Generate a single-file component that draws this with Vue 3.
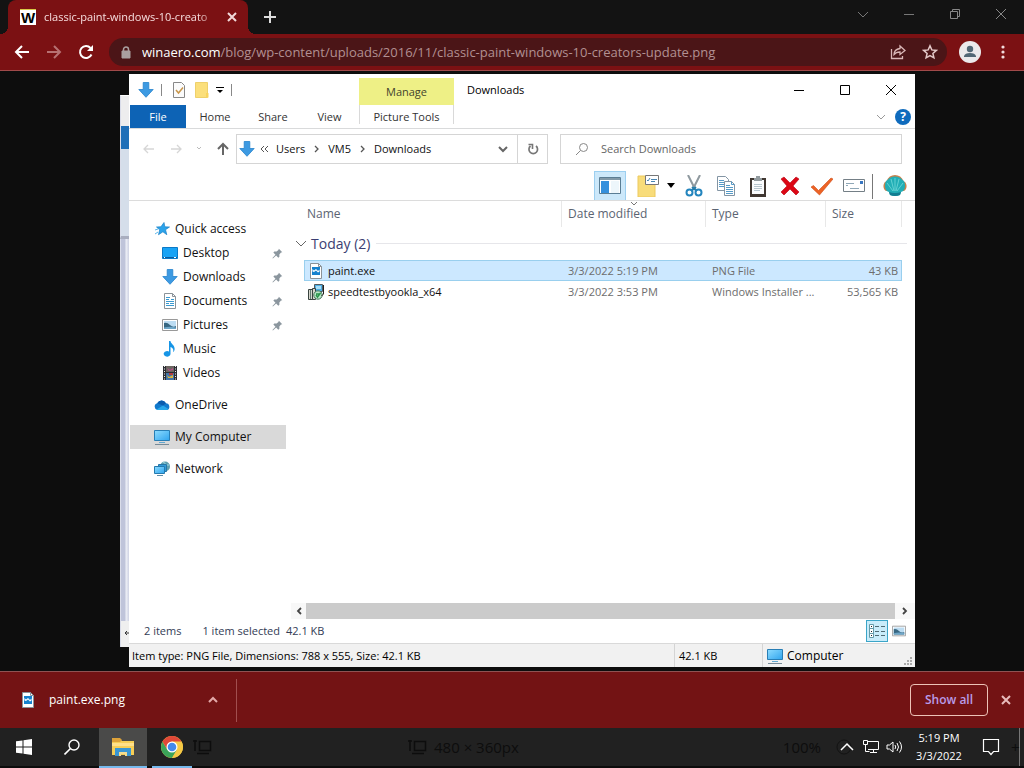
<script setup>
import { ref } from 'vue'

const selected = ref('paint.exe')
const query = ref('')

const places = [
  { name: 'Quick access', icon: 'star', level: 0 },
  { name: 'Desktop', icon: 'desktop', level: 1, pinned: true },
  { name: 'Downloads', icon: 'download', level: 1, pinned: true },
  { name: 'Documents', icon: 'document', level: 1, pinned: true },
  { name: 'Pictures', icon: 'picture', level: 1, pinned: true },
  { name: 'Music', icon: 'music', level: 1 },
  { name: 'Videos', icon: 'video', level: 1 },
  { name: 'OneDrive', icon: 'cloud', level: 0, gap: true },
  { name: 'My Computer', icon: 'monitor', level: 0, gap: true, current: true },
  { name: 'Network', icon: 'network', level: 0, gap: true }
]

const files = [
  { name: 'paint.exe', icon: 'png', date: '3/3/2022 5:19 PM', type: 'PNG File', size: '43 KB' },
  { name: 'speedtestbyookla_x64', icon: 'msi', date: '3/3/2022 3:53 PM', type: 'Windows Installer ...', size: '53,565 KB' }
]

const tools = [
  { name: 'Cut', icon: 'cut' },
  { name: 'Copy', icon: 'copy' },
  { name: 'Paste', icon: 'paste' },
  { name: 'Delete', icon: 'delete' },
  { name: 'Rename', icon: 'check' },
  { name: 'Properties', icon: 'card' }
]
</script>

<template>
  <div class="screen">
    <svg class="sprite" aria-hidden="true">
      <defs>
        <linearGradient id="blueSky" x1="0" y1="0" x2="1" y2="1">
          <stop offset="0" stop-color="#8edcff" /><stop offset="1" stop-color="#2fa4ee" />
        </linearGradient>
      </defs>
      <symbol id="download" viewBox="0 0 16 16">
        <path d="M5.2.5h5.6v7h4.4L8 15.3.8 7.500h4.400z" fill="#3d9ae2" stroke="#2583cd" stroke-width=".8" />
      </symbol>
      <symbol id="star" viewBox="0 0 16 16">
        <path d="M10 1.500l.8 4.300 4.700.2-4 2.700 1.300 5-3.900-2.900-4.400 2.900 1.200-4.900-3.200-2.800 4.400-.2z" fill="#2ba3ea" stroke="#1a7fc6" stroke-width=".7" />
        <path d="M1 9l3-1M1 13l3-2" stroke="#5db7ea" />
      </symbol>
      <symbol id="desktop" viewBox="0 0 16 16">
        <path d="M.5 2.500h15v11H.5z" fill="#18a3f5" stroke="#0b79c6" />
        <path d="M1 12.500h14" stroke="#0a5ca0" /><path d="M2 12.500h1M12 12.500h2" stroke="#fff" />
      </symbol>
      <symbol id="document" viewBox="0 0 16 16">
        <path d="M2.500.5h8l3 3v12h-11z" fill="#fff" stroke="#8b9399" />
        <path d="M4 4.500h4M4 6.500h3M9 6.500h3M4 8.500h8M4 10.500h3M8 10.500h4M4 12.500h8" stroke="#3b9ad0" />
        <path d="M10.500.5v3h3" fill="none" stroke="#8b9399" />
      </symbol>
      <symbol id="picture" viewBox="0 0 16 16">
        <path d="M.5 2.500h15v11H.5z" fill="#fff" stroke="#999" />
        <path d="M2 4h12v8H2z" fill="#bcdcf2" /><path d="M2 6q3-1 6 2t6 1v3H2z" fill="#376782" /><path d="M2 10.500q6-1.500 12 0V12H2z" fill="#6ea6c8" />
      </symbol>
      <symbol id="music" viewBox="0 0 16 16">
        <path d="M7 0h1.500c0 3 5 4 4 9-.3 1-1 2-1.500 2 1-3-.5-4-2.500-5v7a3.400 2.800 0 1 1-1.500-2.500z" fill="#1695e6" />
      </symbol>
      <symbol id="video" viewBox="0 0 16 16">
        <path d="M1 1h14v14H1z" fill="#2c2d33" /><path d="M4 1h8v6H4z" fill="#6b6560" /><path d="M4 8h8v7H4z" fill="#4275a8" />
        <path d="M5 3l3 2 3-2v2l-4 1z" fill="#b9508c" /><path d="M5 10l2 2 4-2v3H6z" fill="#d8b640" /><path d="M7 8h4v2H7z" fill="#b33b3f" />
        <path d="M2.500 1v14M13.500 1v14" stroke="#eee" stroke-dasharray="1 1.500" />
      </symbol>
      <symbol id="cloud" viewBox="0 0 16 16">
        <path d="M3.500 13a3.500 3.500 0 0 1-.3-6.800A5 5 0 0 1 12 6.200 3.500 3.500 0 0 1 13 13z" fill="#1179cc" />
        <path d="M2.500 12.500L9 8.500l5.500 3.500q-.5 1-2 1h-9q-.6 0-1-.5z" fill="#28a8ea" /><path d="M3.200 6.200A5 5 0 0 1 12 6.200L9 8.500z" fill="#0a5cae" />
      </symbol>
      <symbol id="monitor" viewBox="0 0 16 16">
        <path d="M.5 1.500h15v10H.5z" fill="url(#blueSky)" stroke="#287eb5" />
        <path d="M5 13.500h6" stroke="#62a8d0" /><path d="M1 15.500h14" stroke="#778b98" />
      </symbol>
      <symbol id="network" viewBox="0 0 16 16">
        <circle cx="11" cy="5.500" r="5" fill="#5d9faf" /><path d="M9 1q5 2 3 9M7 4h8" stroke="#a4dae2" fill="none" />
        <path d="M4.500 3.500h8v7h-8z" fill="#319bd8" stroke="#2676a7" /><path d="M.5 5.500h10v7H.5z" fill="url(#blueSky)" stroke="#247aae" />
        <path d="M3 14.500h6" stroke="#5f8ca5" />
      </symbol>
      <symbol id="pin" viewBox="0 0 12 12">
        <path d="M7.500.8l3.700 3.700-1.400.5-1.800 2 .1 2.500-1.200 1-2.400-2.400L1 11.500l-.5-.5 3.300-3.600L1.500 5l1-1.200 2.500.1 2-1.700z" fill="#8b969e" />
      </symbol>
      <symbol id="png" viewBox="0 0 16 16">
        <path d="M2.500.5h8l3 3v12h-11z" fill="#fff" stroke="#8b9298" /><path d="M10.500.5v3h3" fill="none" stroke="#8b9298" />
        <path d="M4 4h8v8H4z" fill="#1581ce" /><path d="M4.500 8.500V6l1.500 1.500L8 6l2 2 1.500-1.500v2l-1.500 1-2-2-2 1.500z" fill="#fff" />
      </symbol>
      <symbol id="msi" viewBox="0 0 16 16">
        <path d="M6.500.5h8v7h-8z" fill="#4caee5" stroke="#525b60" /><path d="M8 2h5v3H8z" fill="#a8def7" />
        <path d="M.5 5.500h4v10h-4zM4.500 4.500h3v11h-3z" fill="#d6d6cc" stroke="#38433f" /><path d="M2.500 6v9" stroke="#637d72" />
        <circle cx="10" cy="11" r="4.200" fill="#b8e5c5" stroke="#437258" /><path d="M8 11l1.500 2 3-4M8 10h4" fill="none" stroke="#299448" stroke-width="1.500" /><path d="M15.500 1v9l-2 2" fill="none" stroke="#222" />
      </symbol>
      <symbol id="cut" viewBox="0 0 22 22">
        <path d="M5 0l7 14M17 0l-7 14" stroke="#8f999f" stroke-width="2" /><path d="M9 12l5 4M13 12l-5 4" stroke="#277dab" stroke-width="2" />
        <circle cx="6.500" cy="17.500" r="3" fill="none" stroke="#2385be" stroke-width="2" /><circle cx="15.500" cy="17.500" r="3" fill="none" stroke="#2385be" stroke-width="2" />
      </symbol>
      <symbol id="copy" viewBox="0 0 22 22">
        <path d="M2.500 1.500h8l3 3v11h-11z" fill="#fff" stroke="#8395a4" /><path d="M4 5.500h5M4 7.500h7M4 9.500h7M4 11.500h6" stroke="#559ac7" />
        <path d="M9.500 6.500h7l3 3v11h-10z" fill="#fff" stroke="#8395a4" /><path d="M16.500 6.500v3h3M11 10.500h4M11 12.500h7M11 14.500h7M11 16.500h7M11 18.500h7" stroke="#559ac7" fill="none" />
      </symbol>
      <symbol id="paste" viewBox="0 0 22 22">
        <path d="M3 3h16v19H3z" fill="#403731" /><path d="M5 5h12v14H5z" fill="#fbfcfd" /><path d="M7 3h2V1h4v2h2v3H7z" fill="#929b9f" />
        <path d="M7 9.500h8M7 11.500h8M7 13.500h8M7 15.500h6" stroke="#b8c6ce" />
      </symbol>
      <symbol id="delete" viewBox="0 0 22 22">
        <path d="M2 4l3-2 6 6 6-6 3 2-6 7 6 6-3 3-6-6-6 6-3-3 6-6z" fill="#dc0715" stroke="#b70210" stroke-width=".6" />
      </symbol>
      <symbol id="check" viewBox="0 0 22 22"><path d="M0 12l2.500-1.500 5 5L20 3l2 1L8.500 20z" fill="#ed6325" stroke="#cc4a16" stroke-width=".6" /></symbol>
      <symbol id="card" viewBox="0 0 22 22">
        <path d="M.5 4.500h21v12H.5z" fill="#fff" stroke="#747f86" /><path d="M3 8.500h8M3 10.500h2M7 13.500h9" stroke="#8fa7b7" /><path d="M17 6h3v3h-3z" fill="#3876c1" />
      </symbol>
      <symbol id="shell" viewBox="0 0 24 22">
        <path d="M3 16q-3-2-2.500-6 .5-3 3-4Q6 0 12 0t8.500 6q2.500 1 3 4 .5 4-2.500 6z" fill="#c9824c" />
        <path d="M7 20l-1-3Q2 16 2 11t2.500-6Q7 1.500 12 1.500T19.500 5Q22 6 22 11t-4 6l-1 3q-5 2-10 0z" fill="#22aeb6" />
        <path d="M12 16V3M11 16L8 4M13 16l3-12M10 16L4 8M14 16l6-8" stroke="#74dbda" stroke-width=".8" /><path d="M6 17q6 2 12 0l-1 3q-5 2-10 0z" fill="#137d91" />
      </symbol>
    </svg>

    <header class="browser">
      <div class="tabstrip">
        <div class="tab">
          <span class="favicon">W</span>
          <span class="tab-title">classic-paint-windows-10-creato</span>
          <button class="plain" aria-label="Close tab"><svg width="10" height="10"><path d="M1 1l8 8M9 1l-8 8" stroke="#f2dada" stroke-width="2" /></svg></button>
        </div>
        <button class="plain new-tab" aria-label="New tab"><svg width="12" height="12"><path d="M6 0v12M0 6h12" stroke="#ddd" stroke-width="2" /></svg></button>
        <div class="frame-buttons">
          <button class="plain" aria-label="Search tabs"><svg width="12" height="12"><path d="M1 4l5 5 5-5" stroke="#777" fill="none" /></svg></button>
          <button class="plain" aria-label="Minimize"><svg width="12" height="12"><path d="M1 6.500h10" stroke="#777" /></svg></button>
          <button class="plain" aria-label="Restore"><svg width="12" height="12"><path d="M1.500 3.500h7v7h-7zM3.500 3V1.500h7v7H9" stroke="#888" fill="none" /></svg></button>
          <button class="plain" aria-label="Close"><svg width="12" height="12"><path d="M1 1l10 10M11 1L1 11" stroke="#888" /></svg></button>
        </div>
      </div>
      <div class="toolbar">
        <button class="plain nav-btn" aria-label="Back"><svg width="16" height="16"><path d="M15 8H2M8 2L2 8l6 6" stroke="#fff" stroke-width="2" fill="none" /></svg></button>
        <button class="plain nav-btn" aria-label="Forward"><svg width="16" height="16"><path d="M1 8h13M8 2l6 6-6 6" stroke="#b77172" stroke-width="2" fill="none" /></svg></button>
        <button class="plain nav-btn" aria-label="Reload"><svg width="16" height="16"><path d="M13.500 10.500A6 6 0 1 1 12.500 4" stroke="#fff" stroke-width="2" fill="none" /><path d="M15 1v6H9z" fill="#fff" /></svg></button>
        <div class="omnibox">
          <svg width="10" height="13"><path d="M1 5h8v7H1z" fill="#aaa0a0" stroke="#aaa0a0" /><path d="M2.500 5V3.500a2.500 2.500 0 0 1 5 0V5" fill="none" stroke="#aaa0a0" stroke-width="1.500" /></svg>
          <a class="url" href="#"><b>winaero.com</b>/blog/wp-content/uploads/2016/11/classic-paint-windows-10-creators-update.png</a>
          <button class="plain" aria-label="Share"><svg width="16" height="16"><path d="M1.500 5v9.500h11V12M4 10.500q0-5 6-6V2l5 4.500-5 4V8q-4 0-6 2.500z" stroke="#d9b7b7" fill="none" stroke-width="1.300" /></svg></button>
          <button class="plain" aria-label="Bookmark"><svg width="16" height="16"><path d="M8 1.800l1.800 4.100 4.500.5-3.400 3 1 4.400L8 11.500l-3.900 2.300 1-4.400-3.400-3 4.500-.5z" stroke="#e3c8c8" fill="none" stroke-width="1.500" /></svg></button>
        </div>
        <button class="plain profile" aria-label="Profile"><svg width="22" height="22"><circle cx="11" cy="11" r="11" fill="#ebe9eb" /><circle cx="11" cy="8" r="3.200" fill="#526775" /><path d="M5 16v-1q1-3 6-3t6 3v1z" fill="#526775" /></svg></button>
        <button class="plain more" aria-label="Menu"><svg width="4" height="14"><g fill="#f2dcdc"><circle cx="2" cy="2" r="1.600" /><circle cx="2" cy="7" r="1.600" /><circle cx="2" cy="12" r="1.600" /></g></svg></button>
      </div>
    </header>

    <main class="page">
      <div class="back-window">
        <i class="back-title"></i><i class="back-blue"></i><i class="back-ribbon"></i><i class="back-body"></i>
        <i class="back-foot"><svg width="8" height="8"><path d="M8 4H1M3 2L1 4l2 2" stroke="#333" fill="none" /></svg></i>
      </div>
      <section class="explorer" aria-label="Downloads">
        <div class="titlebar">
          <div class="quick">
            <svg class="i16"><use href="#download" /></svg><i class="bar"></i>
            <button class="plain q-check" aria-label="Properties"><svg width="14" height="16"><path d="M1.500.5h8l3 3v12h-11z" fill="#fbfbfb" stroke="#888" /><path d="M4 8l2.500 3L11 5.500" fill="none" stroke="#c8964a" stroke-width="1.500" /></svg></button>
            <button class="plain" aria-label="New folder"><svg width="14" height="16"><path d="M.5.5h12v15H.5z" fill="#fbdf7b" stroke="#eed06b" /><path d="M11 11h2.500v4.500H11z" fill="#f8d45c" /></svg></button>
            <button class="plain q-menu" aria-label="Customize"><svg width="8" height="8"><path d="M0 1.500h8" stroke="#000" /><path d="M1 4h6L4 7z" /></svg></button><i class="bar"></i>
          </div>
          <div class="manage">Manage</div>
          <h1>Downloads</h1>
          <div class="controls">
            <button class="plain" aria-label="Minimize"><svg width="12" height="12"><path d="M1 6.500h10" stroke="#000" /></svg></button>
            <button class="plain" aria-label="Maximize"><svg width="12" height="12"><path d="M1.500 1.500h9v9h-9z" stroke="#000" fill="none" /></svg></button>
            <button class="plain" aria-label="Close"><svg width="12" height="12"><path d="M1 1l10 10M11 1L1 11" stroke="#000" /></svg></button>
          </div>
        </div>
        <div class="ribbon">
          <button class="plain file-tab">File</button>
          <button class="plain">Home</button>
          <button class="plain">Share</button>
          <button class="plain view-tab">View</button>
          <button class="plain picture-tab">Picture Tools</button>
          <div class="ribbon-end">
            <button class="plain" aria-label="Expand ribbon"><svg width="10" height="6"><path d="M1 1l4 4 4-4" stroke="#999" fill="none" /></svg></button>
            <button class="plain help" aria-label="Help">?</button>
          </div>
        </div>

        <div class="address-row">
          <div class="history">
            <button class="plain" aria-label="Back"><svg width="12" height="12"><path d="M11 6H1M5 2L1 6l4 4" stroke="#d6d6d6" fill="none" stroke-width="1.300" /></svg></button>
            <button class="plain" aria-label="Forward"><svg width="12" height="12"><path d="M1 6h10M7 2l4 4-4 4" stroke="#d6d6d6" fill="none" stroke-width="1.300" /></svg></button>
            <button class="plain recent" aria-label="Recent"><svg width="6" height="6"><path d="M1 1l2 2 2-2" stroke="#bbb" fill="none" /></svg></button>
            <button class="plain" aria-label="Up"><svg width="12" height="14"><path d="M6 13V2M1 7l5-5 5 5" stroke="#666" fill="none" stroke-width="2" /></svg></button>
          </div>
          <nav class="address" aria-label="Path">
            <svg class="i16"><use href="#download" /></svg>
            <svg class="laquo" width="8" height="8"><path d="M4 1L1 4l3 3M8 1L5 4l3 3" stroke="#555" fill="none" /></svg>
            <a href="#">Users</a><svg class="sep" width="6" height="8"><path d="M1 1l3 3-3 3" stroke="#555" fill="none" stroke-width="1.300" /></svg>
            <a href="#">VM5</a><svg class="sep" width="6" height="8"><path d="M1 1l3 3-3 3" stroke="#555" fill="none" stroke-width="1.300" /></svg>
            <a href="#">Downloads</a>
            <button class="plain drop" aria-label="Previous locations"><svg width="10" height="8"><path d="M1 2l4 4 4-4" stroke="#666" fill="none" stroke-width="2" /></svg></button>
          </nav>
          <button class="plain refresh" aria-label="Refresh"><svg width="12" height="12"><path d="M9 3A4.300 4.300 0 1 1 3.500 3" stroke="#777" fill="none" stroke-width="1.700" /><path d="M1.500 1.500h4V6" stroke="#777" fill="none" stroke-width="1.600" /></svg></button>
          <label class="search">
            <svg width="14" height="14"><circle cx="8.500" cy="5.500" r="4" stroke="#888" fill="none" /><path d="M5.500 8.500L1 13" stroke="#888" /></svg>
            <input v-model="query" type="text" placeholder="Search Downloads" aria-label="Search Downloads" />
          </label>
        </div>

        <div class="tools">
          <button class="plain tool active" aria-label="Navigation pane"><svg width="22" height="18"><path d="M.5.5h21v16H.5z" fill="#fff" stroke="#5a7d94" /><path d="M1 1h20v2H1z" fill="#8199a8" /><path d="M2 4h8v12H2z" fill="#3690dc" /><path d="M12 4h8v12h-8z" fill="#edf6fb" /></svg></button>
          <button class="plain tool" aria-label="Folder options"><svg width="22" height="22"><path d="M1 1h7l2 3h8v18H1z" fill="#f8dc7a" stroke="#ecc95e" /><path d="M8.500.5h13v9h-13z" fill="#fff" stroke="#777" /><path d="M10 5l1 1 2-3M14 4.500h6M14 6.500h4" stroke="#4985b1" fill="none" /></svg></button>
          <button class="plain caret" aria-label="More options"><svg width="8" height="5"><path d="M0 0h8L4 5z" /></svg></button>
          <button v-for="t in tools" :key="t.name" class="plain tool" :aria-label="t.name"><svg class="i22"><use :href="'#' + t.icon" /></svg></button>
          <i class="tool-bar"></i>
          <button class="plain tool" aria-label="Classic Shell"><svg width="24" height="22"><use href="#shell" /></svg></button>
        </div>

        <div class="body">
          <nav class="sidebar" aria-label="Places">
            <a v-for="p in places" :key="p.name" href="#" :class="['place', 'level' + p.level, { gap: p.gap, current: p.current }]">
              <svg class="i16"><use :href="'#' + p.icon" /></svg><span>{{ p.name }}</span>
              <svg v-if="p.pinned" class="pin" width="11" height="11"><use href="#pin" /></svg>
            </a>
          </nav>
          <div class="content">
            <div class="list">
              <table>
                <colgroup><col /><col class="c-date" /><col class="c-type" /><col class="c-size" /></colgroup>
                <thead>
                  <tr><th>Name</th><th class="sorted">Date modified<svg width="8" height="5"><path d="M1 1l3 3 3-3" stroke="#777" fill="none" /></svg></th><th>Type</th><th>Size</th></tr>
                </thead>
                <tbody>
                  <tr><th colspan="4" class="group"><div><svg width="12" height="8"><path d="M1 1l5 5 5-5" stroke="#666" fill="none" /></svg><span>Today (2)</span><i></i></div></th></tr>
                  <tr v-for="f in files" :key="f.name" :class="['file', { selected: selected === f.name }]" @click="selected = f.name">
                    <td class="name"><div><svg class="i16"><use :href="'#' + f.icon" /></svg>{{ f.name }}</div></td>
                    <td>{{ f.date }}</td><td>{{ f.type }}</td><td class="size">{{ f.size }}</td>
                  </tr>
                </tbody>
              </table>
            </div>
            <div class="scroll">
              <button class="plain" aria-label="Scroll left"><svg width="6" height="8"><path d="M5 1L2 4l3 3" stroke="#444" fill="none" stroke-width="1.800" /></svg></button>
              <i></i>
              <button class="plain" aria-label="Scroll right"><svg width="6" height="8"><path d="M1 1l3 3-3 3" stroke="#444" fill="none" stroke-width="1.800" /></svg></button>
            </div>
          </div>
        </div>

        <div class="summary">
          <span>2 items</span><span class="picked">1 item selected</span><span>42.1 KB</span>
          <button class="plain view on" aria-label="Details view"><svg width="16" height="14"><path d="M.5.5h4v13h-4zM.5 4.500h4M.5 9.500h4" stroke="#659ba9" fill="#fff" /><path d="M2 2.500h1M2 7.500h1M2 11.500h1" stroke="#222" /><path d="M6 2.500h4M12 2.500h4M6 7.500h4M12 7.500h4M6 11.500h4M12 11.500h4" stroke="#506b74" /></svg></button>
          <button class="plain view" aria-label="Large icons"><svg width="14" height="14"><use href="#picture" /></svg></button>
        </div>
        <footer class="status">
          <span class="info">Item type: PNG File, Dimensions: 788 x 555, Size: 42.1 KB</span>
          <span class="bytes">42.1 KB</span>
          <span class="zone"><svg class="i16"><use href="#monitor" /></svg>Computer<svg class="grip" width="8" height="8"><path d="M0 7h2M3 7h2M6 7h2M3 4h2M6 4h2M6 1h2" stroke="#aaa" stroke-width="2" /></svg></span>
        </footer>
      </section>
    </main>

    <div class="shelf">
      <button class="plain shelf-item">
        <svg class="i16"><use href="#png" /></svg><span>paint.exe.png</span>
        <svg width="10" height="8"><path d="M1 6l4-4 4 4" stroke="#e3a9a9" fill="none" stroke-width="2" /></svg>
      </button>
      <button class="plain show-all">Show all</button>
      <button class="plain shelf-close" aria-label="Close downloads"><svg width="10" height="10"><path d="M1 1l8 8M9 1l-8 8" stroke="#e8bcbc" stroke-width="2" /></svg></button>
    </div>

    <footer class="taskbar">
      <button class="plain start" aria-label="Start"><svg width="16" height="16"><path d="M0 2.300l6.500-.9v6.100H0zM7.500 1.200L16 0v7.500H7.500zM0 8.500h6.500v6.100L0 13.700zM7.500 8.500H16V16l-8.500-1.200z" fill="#fff" /></svg></button>
      <button class="plain start" aria-label="Search"><svg width="16" height="16"><circle cx="10" cy="6" r="5" fill="none" stroke="#fff" stroke-width="1.400" /><path d="M6.500 9.500L.5 15.500" stroke="#fff" stroke-width="1.600" /></svg></button>
      <button class="plain app-btn open" aria-label="File Explorer"><svg width="22" height="18"><path d="M0 1h8l2 2h12v14H0z" fill="#f6ce56" /><path d="M0 0h8l2 2-2 2H0z" fill="#dda23a" /><path d="M0 5h22v3H0z" fill="#ffe08a" /><path d="M3 18v-8h16v8h-4v-4H7v4z" fill="#3a96d3" /><path d="M7 14h8v4h-2v-2H9v2H7z" fill="#f4dc93" /></svg></button>
      <button class="plain app-btn chrome" aria-label="Chrome"><svg width="22" height="22"><circle cx="11" cy="11" r="11" fill="#f6c945" /><path d="M1.500 5.500A11 11 0 0 0 11 22l5-8.500L11 11 6.500 14z" fill="#3ba459" /><path d="M11 5.500h9.500A11 11 0 0 1 11 22l5-8z" fill="#f6c945" /><path d="M1.500 5.500A11 11 0 0 1 20.500 5.500H11L6 13z" fill="#df4838" /><circle cx="11" cy="11" r="5.500" fill="#fff" /><circle cx="11" cy="11" r="4.300" fill="#4489ec" /></svg></button>
      <svg class="ghost-icon" width="20" height="16"><path d="M2 1v11M0 2h4M6.500 2.500h11v9h-11zM4 14.500h12" fill="none" stroke="#0d0d0d" stroke-width="1.500" /></svg>
      <span class="ghost dims"><svg width="20" height="16"><path d="M2 1v11M0 2h4M6.500 2.500h11v9h-11zM4 14.500h12" fill="none" stroke="#0d0d0d" stroke-width="1.500" /></svg>480 × 360px</span>
      <span class="ghost">100%</span>
      <div class="tray">
        <button class="plain tray-up" aria-label="Hidden icons"><svg width="22" height="18"><circle cx="8" cy="9" r="7" stroke="#121212" fill="none" /><path d="M5 12l6-6 6 6" stroke="#fff" fill="none" stroke-width="1.500" /></svg></button>
        <button class="plain" aria-label="Network"><svg width="16" height="14"><path d="M5 1.500h10.500v8H5M10.500 9.500v3M7 12.500h7M.5.500h4v4h-4zM2.500 4.500v7h4" stroke="#fff" fill="none" /></svg></button>
        <button class="plain" aria-label="Volume"><svg width="18" height="14"><path d="M1 5v4h2.500L7 12V2L3.500 5z" stroke="#fff" fill="none" /><path d="M9 5q1.500 2 0 4M11 3q3 4 0 8M13.500 1.500q4 5.500 0 11" stroke="#fff" fill="none" /></svg></button>
        <time class="clock"><span>5:19 PM</span><span>3/3/2022</span></time>
        <button class="plain notes" aria-label="Notifications"><svg width="18" height="18"><path d="M1.500 1.500h15v12h-5L9 16.500l-2.500-3h-5z" stroke="#fff" fill="none" stroke-width="1.200" /></svg></button>
        <span class="ghost plus">+</span>
      </div>
    </footer>
  </div>
</template>

<style>
body { background: #0d0d0d; }
</style>

<style scoped>
* { box-sizing: border-box; }
.screen { display: flex; flex-direction: column; min-height: 100vh; background: #0d0d0d; font: 12px/16px "Open Sans", "Noto Sans", sans-serif; color: #111; overflow: hidden; }
.sprite { position: absolute; width: 0; height: 0; }
svg { flex: none; display: block; }
.plain { border: 0; padding: 0; background: none; font: inherit; color: inherit; display: flex; align-items: center; justify-content: center; }
a { color: inherit; text-decoration: none; }
.i16 { width: 16px; height: 16px; }
.i22 { width: 22px; height: 22px; }

.tabstrip { height: 34px; display: flex; align-items: stretch; background: #131313; padding-left: 8px; }
.tab { position: relative; width: 240px; display: flex; align-items: center; background: #7b1113; border-radius: 8px 8px 0 0; padding: 0 11px 0 12px; color: #f7dede; }
.tab::before, .tab::after { content: ""; position: absolute; bottom: 0; width: 8px; height: 8px; }
.tab::before { left: -8px; background: radial-gradient(circle at 0 0, #131313 8px, #7b1113 8px); }
.tab::after { right: -8px; background: radial-gradient(circle at 100% 0, #131313 8px, #7b1113 8px); }
.favicon { width: 16px; height: 16px; background: #fff; color: #000; font: 900 15px/16px "Liberation Sans", sans-serif; text-align: center; border-top: 1px solid #d8c94a; }
.tab-title { flex: 1; min-width: 0; margin: 0 8px; font-size: 11px; white-space: nowrap; mask-image: linear-gradient(90deg, #000 88%, transparent); }
.new-tab { width: 44px; }
.frame-buttons { display: flex; margin-left: auto; padding-bottom: 6px; }
.frame-buttons button { width: 46px; }
.toolbar { height: 37px; display: flex; align-items: center; background: #7b1113; border-bottom: 1px solid #a04a4a; padding-left: 6px; }
.nav-btn { width: 32px; height: 32px; }
.omnibox { flex: 1; min-width: 0; height: 28px; margin-left: 7px; border-radius: 14px; background: #4b1517; display: flex; align-items: center; gap: 16px; padding: 0 9px 0 12px; }
.url { flex: 1; min-width: 0; margin-left: -5px; font-size: 13px; color: #b29092; white-space: nowrap; overflow: hidden; }
.url b { font-weight: 400; color: #fff; }
.profile { width: 42px; margin-left: 2px; }
.more { width: 24px; margin-right: 9px; }

.page { position: relative; flex: 1; min-height: 600px; background: #0d0d0d; }
.back-window { position: absolute; left: 120px; top: 24px; bottom: 24px; width: 12px; display: flex; flex-direction: column; background: #c5c9dc; }
.back-window i { display: block; border-left: 1px solid #d9dce9; }
.back-title { height: 31px; background: #ededee; border-top: 1px solid #fff; }
.back-blue { height: 23px; background: #1f6fb8; }
.back-ribbon { height: 90px; background: #d5deea; border-bottom: 3px solid #a9aebf; }
.back-body { flex: 1; background: linear-gradient(90deg, #bfc4da 4px, #eef0f7 5px, #cfd3e4 8px); }
.back-foot { height: 26px; background: #efefef; padding: 8px 0 0 3px; }

.explorer { position: absolute; left: 129px; right: 109px; top: 3px; bottom: 4px; display: flex; flex-direction: column; background: #fff; font-size: 11px; }
.titlebar { height: 31px; display: flex; align-items: center; }
.quick { width: 230px; display: flex; align-items: center; padding-left: 9px; }
.bar { width: 1px; height: 12px; background: #888; margin-left: 7px; }
.q-check { margin: 0 9px 0 10px; }
.q-menu { margin-left: 7px; }
.manage { width: 95px; height: 27px; align-self: flex-end; background: #eef086; display: flex; align-items: center; justify-content: center; color: #44442c; }
h1 { margin: 0 0 0 13px; font: inherit; color: #000; }
.controls { margin-left: auto; display: flex; padding-right: 1px; }
.controls button { width: 46px; height: 31px; }
.ribbon { height: 24px; display: flex; border-bottom: 1px solid #d9dadb; color: #333; padding-left: 1px; }
.ribbon > button { width: 58px; }
.ribbon .file-tab { width: 56px; background: #0d63b5; color: #fff; height: 23px; }
.ribbon .view-tab { width: 57px; padding-right: 2px; }
.ribbon .picture-tab { width: 95px; height: 19px; align-self: flex-start; border: solid #d9d9d9; border-width: 0 1px; padding-top: 5px; }
.ribbon-end { margin-left: auto; display: flex; align-items: center; gap: 9px; padding-right: 4px; }
.help { width: 16px; height: 16px; border-radius: 8px; background: #0f6bbd; color: #fff; font-size: 12px; font-weight: 700; }

.address-row { display: flex; height: 30px; margin: 5px 13px 0 0; }
.history { width: 107px; display: flex; align-items: center; padding-left: 14px; justify-content: space-between; padding-right: 7px; }
.address { width: 282px; border: 1px solid #d5d5d5; display: flex; align-items: center; padding-left: 2px; color: #111; }
.laquo { margin: 0 8px 0 5px; }
.sep { margin: 0 8px 0 9px; }
.drop { margin-left: auto; width: 28px; }
.refresh { width: 30px; border: 1px solid #d5d5d5; border-left: 0; }
.search { flex: 1; margin-left: 12px; border: 1px solid #d5d5d5; display: flex; align-items: center; padding-left: 14px; gap: 12px; }
.search input { flex: 1; min-width: 0; border: 0; padding: 0; outline: 0; background: none; font: inherit; }
.search input::placeholder { color: #666; opacity: 1; }

.tools { height: 37px; padding: 7px 4px 0 0; display: flex; justify-content: flex-end; align-items: stretch; border-bottom: 1px solid #dcdcdc; }
.tool { width: 32px; }
.tool.active { background: #cce8fa; border: 1px solid #9ccff0; border-bottom: 0; margin-right: 6px; }
.caret { width: 14px; }
.tool-bar { width: 1px; margin: 3px 6px 1px 2px; background: #777; }

.body { flex: 1; display: flex; min-height: 0; }
.sidebar { width: 157px; padding: 16px 0 0 1px; font-size: 12px; }
.place { height: 24px; display: flex; align-items: center; gap: 5px; }
.place.level0 { padding-left: 24px; }
.place.level1 { padding-left: 32px; }
.place.gap { margin-top: 8px; }
.place.current { background: #d9d9d9; }
.pin { margin-left: auto; margin-right: 3px; }
.content { flex: 1; min-width: 0; margin-left: 5px; display: flex; flex-direction: column; }
.list { flex: 1; padding: 0 13px; }
table { width: 100%; table-layout: fixed; border-collapse: separate; border-spacing: 0; }
.c-date { width: 144px; }
.c-type { width: 120px; }
.c-size { width: 76px; }
th { font-weight: 400; text-align: left; }
thead th { position: relative; height: 26px; padding: 0 3px; font-size: 12px; color: #5b6472; border-right: 1px solid #e8e8e8; }
thead th + th { padding-left: 6px; }
.sorted svg { position: absolute; top: 0; left: 68px; }
.group { height: 33px; padding: 0; }
.group div { display: flex; align-items: center; margin: 0 -5px 0 -9px; }
.group span { font-size: 14px; color: #3b3e72; margin: 0 6px 0 4px; }
.group i { flex: 1; height: 1px; background: #e6e6ea; }
.file td { height: 21px; padding: 0 0 0 6px; color: #6d6d6d; white-space: nowrap; border: 0 solid #99cfee; overflow: hidden; line-height: 19px; }
.file .name { padding-left: 4px; color: #111; }
.name div { display: flex; align-items: center; gap: 4px; }
.file .size { text-align: right; padding: 0 4px 0 0; }
.selected td { background: #cce8ff; border-width: 1px 0; }
.selected .name { border-left-width: 1px; padding-left: 3px; }
.selected .size { border-right-width: 1px; padding-right: 3px; }
.scroll { height: 16px; display: flex; }
.scroll i { flex: 1; background: #cbcbcb; }
.scroll button { width: 15px; background: #f8f8f8; }
.scroll button:last-child { width: 20px; }

.summary { height: 24px; display: flex; align-items: center; padding: 0 5px 0 15px; color: #333c55; }
.picked { margin: 0 6px 0 21px; }
.view { width: 22px; height: 22px; }
.view.on { margin-left: auto; background: #c9ecfa; border: 1px solid #3ba5c8; }
.status { height: 24px; display: flex; align-items: stretch; background: #f1f1f1; border-top: 1px solid #d9d9d9; color: #000; }
.status span { display: flex; align-items: center; }
.info { flex: 1; padding-left: 3px; }
.bytes { width: 88px; padding-left: 4px; border-left: 1px solid #d4d4d4; }
.status .zone { position: relative; width: 153px; gap: 4px; padding-left: 4px; border-left: 1px solid #d4d4d4; font-size: 12px; }
.grip { position: absolute; right: 3px; bottom: 2px; }

.shelf { height: 57px; display: flex; align-items: center; background: #731314; border-top: 1px solid #8f5252; padding-right: 8px; color: #fff; }
.shelf-item { width: 237px; height: 43px; border-right: 1px solid #a14f4f; padding: 0 18px 0 20px; }
.shelf-item span { flex: 1; text-align: left; margin-left: 13px; }
.show-all { margin-left: auto; width: 78px; height: 32px; border: 1px solid #edc2b7; border-radius: 4px; color: #b99ce8; font-weight: 600; }
.shelf-close { width: 20px; margin-left: 8px; }

.taskbar { height: 40px; display: flex; align-items: center; background: #212121; border-bottom: 2px solid #0c0c0c; color: #fff; }
.start { width: 48px; height: 38px; }
.app-btn { width: 48px; height: 40px; margin-bottom: -2px; border-bottom: 2px solid #76b9ed; }
.open { background: #4a4a49; margin-left: 3px; }
.chrome { width: 40px; margin-left: 5px; }
.ghost { font-size: 15px; color: #0d0d0d; }
.ghost-icon { margin-left: 1px; }
.dims { display: flex; align-items: center; gap: 6px; margin: 0 auto 0 195px; }
.tray { display: flex; align-items: center; margin-left: 14px; align-self: stretch; border-right: 1px solid #777; margin-right: 4px; }
.tray button { width: 24px; }
.clock { width: 64px; font-size: 11px; line-height: 18px; display: flex; flex-direction: column; align-items: center; }
.tray .notes { width: 40px; }
.plus { width: 8px; }
</style>
